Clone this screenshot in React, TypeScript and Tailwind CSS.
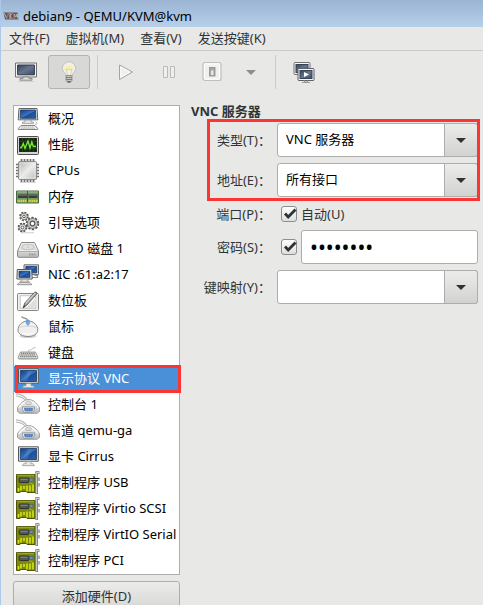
import { useState, type ReactNode } from "react";

/* ---------- icons ---------- */

function Icon({ children, size = 24 }: { children: ReactNode; size?: number }) {
  return (
    <svg width={size} height={size} viewBox="0 0 24 24" fill="none" aria-hidden="true" className="shrink-0">
      {children}
    </svg>
  );
}

function Gradients() {
  return (
    <svg width="0" height="0" aria-hidden="true" className="absolute">
      <defs>
        <linearGradient id="blue" x1="0" y1="0" x2="1" y2="1">
          <stop offset="0" stopColor="#123f86" />
          <stop offset="0.5" stopColor="#3c74c0" />
          <stop offset="0.55" stopColor="#1c4f9b" />
          <stop offset="1" stopColor="#2a62ad" />
        </linearGradient>
        <linearGradient id="slate" x1="0" y1="0" x2="1" y2="1">
          <stop offset="0" stopColor="#36445a" />
          <stop offset="0.5" stopColor="#66758d" />
          <stop offset="1" stopColor="#3d4b61" />
        </linearGradient>
        <linearGradient id="metal" x1="0" y1="0" x2="1" y2="1">
          <stop offset="0" stopColor="#b4b4b2" />
          <stop offset="0.5" stopColor="#ececea" />
          <stop offset="1" stopColor="#b9b9b7" />
        </linearGradient>
        <linearGradient id="silver" x1="0" y1="0" x2="0" y2="1">
          <stop offset="0" stopColor="#fbfbfa" />
          <stop offset="1" stopColor="#bcbdba" />
        </linearGradient>
      </defs>
    </svg>
  );
}

const ComputerIcon = () => (
  <Icon>
    <path d="M3 1.5h18l.8 11.3H2.2z" fill="#eeeeec" stroke="#62645f" />
    <path d="M4.5 3h15l.4 8.3H4.1z" fill="url(#blue)" stroke="#173764" strokeWidth=".8" />
    <path d="M9 13h6v2h2.5v1.6h-11V15H9z" fill="#e4e4e2" stroke="#8b8d88" strokeWidth=".7" />
    <path d="M5 18.5h14l2.7 3v1H2.3v-1z" fill="#f1f1ef" stroke="#777974" strokeWidth=".9" />
    <path d="M5.5 20h12.5M4.8 21.3h14" stroke="#a4a6a1" strokeDasharray="1.5 .6" strokeWidth=".8" />
    <path d="M19 17.5c2.5-.5 2.5-2 .5-2.5" stroke="#999b96" strokeWidth=".8" />
  </Icon>
);

const PerformanceIcon = () => (
  <Icon>
    <rect x="1.5" y="3.5" width="21" height="18" rx="1" fill="#d3d7cf" stroke="#4d504b" />
    <rect x="3.5" y="5.5" width="17" height="13" fill="#172613" stroke="#20251e" />
    <path d="M6.5 5v14M10 5v14M13.5 5v14M17 5v14M3 8.5h18M3 12h18M3 15.5h18" stroke="#31502a" strokeWidth=".5" />
    <path d="M4 14.5h1.5l1.800-4 1.700 5 3-7.500 2 7 1.800-6 1.500 4.500h2.700" stroke="#73ef2e" strokeWidth="1.300" />
  </Icon>
);

const CpuIcon = () => (
  <Icon>
    <path
      d="M5.5 0v23M8.5 0v23M11.5 0v23M14.5 0v23M17.5 0v23M0 5.5h23M0 8.5h23M0 11.5h23M0 14.5h23M0 17.5h23"
      stroke="#6f716d"
      strokeWidth="1.7"
    />
    <rect x="2.6" y="2.6" width="18" height="18" rx="1" fill="url(#metal)" stroke="#858784" />
    <rect x="4" y="4" width="15" height="15" stroke="#ededeb" strokeWidth=".7" />
    <path d="M4 23.500h16" stroke="#bbb" strokeWidth=".6" />
  </Icon>
);

const MemoryIcon = () => (
  <Icon>
    <path d="M.5 6h22v12H.5z" fill="#6f9a64" stroke="#446b3b" />
    <path d="M1 7h21" stroke="#a3c49a" />
    <rect x="2" y="9" width="9" height="4" fill="#3a3d39" />
    <rect x="12.5" y="9" width="9" height="4" fill="#3a3d39" />
    <path d="M2 10h9M12.5 10h9" stroke="#858984" />
    <path d="M1.5 16h9.500M12.500 16h9.500" stroke="#e8d64a" strokeWidth="2.600" strokeDasharray="1.200 .6" />
    <path d="M11.5 6v11" stroke="#315c2c" />
  </Icon>
);

const GearsIcon = () => (
  <Icon>
    <circle cx="8" cy="5.4" r="3.7" stroke="#555753" strokeWidth="2.2" strokeDasharray="1.8 1.1" />
    <circle cx="8" cy="5.4" r="3.2" fill="#e9e9e7" stroke="#6c6e6a" strokeWidth=".8" />
    <circle cx="8" cy="5.4" r="1.3" fill="#fff" stroke="#555753" />
    <circle cx="6.5" cy="16.5" r="3.8" stroke="#555753" strokeWidth="2.2" strokeDasharray="1.9 1.1" />
    <circle cx="6.5" cy="16.5" r="3.3" fill="#e9e9e7" stroke="#6c6e6a" strokeWidth=".8" />
    <circle cx="6.5" cy="16.5" r="1.4" fill="#fff" stroke="#555753" />
    <circle cx="16.5" cy="12.5" r="5.5" stroke="#555753" strokeWidth="2.4" strokeDasharray="2.2 1.25" />
    <circle cx="16.5" cy="12.5" r="5" fill="#c9cac7" stroke="#747672" strokeWidth=".8" />
    <circle cx="16.5" cy="12.5" r="2.3" fill="#fff" stroke="#555753" strokeWidth="1.2" />
    <path d="M5 21.8h13" stroke="#ccc" />
  </Icon>
);

const DiskIcon = () => (
  <Icon>
    <path d="M5.5 5.5h13l4 8.5v5.5l-1 .8h-19l-1-.8V14z" fill="url(#silver)" stroke="#868884" />
    <path d="M6.3 6.5h11.5l3.3 7H3z" fill="#d9dad7" stroke="#f5f5f4" strokeWidth=".7" />
    <ellipse cx="12" cy="10" rx="5.8" ry="2.8" fill="#e2e3e0" stroke="#b4b6b2" strokeWidth=".7" />
    <ellipse cx="12" cy="10" rx="1.8" ry=".8" fill="#c9cbc7" />
    <path d="M1.5 14.5h21" stroke="#a5a7a3" strokeWidth=".8" />
    <path d="M13 17.5h7" stroke="#8f918d" strokeWidth="1.8" strokeDasharray=".9 .7" />
  </Icon>
);

const NicIcon = () => (
  <Icon>
    <path d="M8 1.8h14.5v9.8H8z" fill="#eeeeec" stroke="#686a65" />
    <path d="M9.8 3.4h11v6.5h-11z" fill="url(#blue)" stroke="#173764" strokeWidth=".8" />
    <path d="M13.5 14.5h8v-2h-3" stroke="#898b86" strokeWidth="1.2" />
    <path d="M1.3 6.5h14.4l.5 9.5H.9z" fill="#eeeeec" stroke="#555751" />
    <path d="M3 8.2h11v6.2H3z" fill="url(#blue)" stroke="#173764" strokeWidth=".8" />
    <path d="M6 16.3h5v1.6h2v1H4.2v-1H6z" fill="#e7e7e4" stroke="#8b8d88" strokeWidth=".6" />
    <path d="M3 19.7h11l1.8 2H1.2z" fill="#f1f1ef" stroke="#777974" strokeWidth=".8" />
  </Icon>
);

const TabletIcon = () => (
  <Icon>
    <rect x="1.5" y="4.500" width="21" height="17" rx="1" fill="#f0f0ee" stroke="#858783" />
    <rect x="4.2" y="6.8" width="15.6" height="12.400" fill="#fff" stroke="#b8bab6" strokeWidth=".8" />
    <path d="M11 18l9-9v8l-3 2.200h-8z" fill="#dededc" />
    <path d="M7 19l1.800-5L18.600 3.200q2.300-1 2.500 1.300L11 16z" fill="#9b9d99" stroke="#555753" strokeWidth=".8" />
    <path d="M9.800 14.300L19.2 4" stroke="#dadbd8" strokeWidth="1.1" />
    <path d="M7 19l1.2-2.7 1.2 1z" fill="#2e3436" />
  </Icon>
);

const MouseIcon = () => (
  <Icon>
    <path d="M5.5 1.5c1.5 3 5 0 6.2 4" stroke="#888a85" strokeWidth="1.2" />
    <ellipse cx="12" cy="21" rx="8.5" ry="2" fill="#cfcfcd" />
    <path d="M12 6C6 6 2 10.5 2 15c0 4 4.5 6.5 10 6.5s9.8-2.5 9.8-6.5c0-4.500-3.800-9-9.800-9z" fill="#f0f0ee" stroke="#888a85" />
    <path d="M3.500 12.800c4-2.300 13-2.300 17 0" stroke="#c9cbc7" strokeWidth=".8" />
    <path d="M10.800 5.200h2.200l.6 2.800-1.700 2.400-1.700-2.400z" fill="#78aeea" stroke="#4d87c8" strokeWidth=".7" />
    <path d="M5 17c2 2.500 11 3 14 0" stroke="#fff" />
  </Icon>
);

const KeyboardIcon = () => (
  <Icon>
    <path d="M12.500 11c-1-3 3-1.500 4-3 .5-1.500 1.500-1 3-1.500" stroke="#a9aba6" strokeWidth=".8" />
    <path d="M4.500 11h15l2.300 5v1.600H2.200V16z" fill="#e7e7e4" stroke="#888a85" strokeWidth=".8" />
    <path d="M5 12.300h14M4.500 14h15M3.800 15.700h16.500" stroke="#656762" strokeWidth="1.100" strokeDasharray="1.400 .5" />
    <path d="M3 18.500h18" stroke="#c9cac7" />
  </Icon>
);

const MonitorIcon = () => (
  <Icon>
    <path d="M2.500 1.800h19.800v14.400H2.500z" fill="#eeeeec" stroke="#555753" />
    <path d="M4.300 3.500h16.200v11H4.300z" fill="url(#blue)" stroke="#173764" strokeWidth=".8" />
    <path d="M12 4h4l-5 10H6.500z" fill="#6a9bdc" opacity=".35" />
    <path d="M10 16.500h5v2.200h2.200l1.300 2H6.300l1.300-2H10z" fill="#e8e8e5" stroke="#8d8f89" strokeWidth=".7" />
  </Icon>
);

const SerialIcon = () => (
  <Icon>
    <path d="M0 .8c5 .4 9 2 11 6.200M0 3c4 .3 7 1.500 9 4" stroke="#b4b6b2" strokeWidth="1.200" />
    <path d="M12.500 6.500c-3.500 0-7.500 3-11 8v4l2.500 1.800h17l2.500-1.800v-4c-3.500-5-6.500-8-11-8z" fill="url(#silver)" stroke="#989a96" strokeWidth=".9" />
    <path d="M3 14.500c5-8 14-8 19 0" stroke="#fff" strokeWidth="1.200" />
    <path d="M9.500 9.500c1.500-2 4.500-2 6 0l-.8 2h-4.400z" fill="#dcddda" stroke="#a9aba6" strokeWidth=".7" />
    <path d="M6.500 13.800h12v2.800L17 19.300H8l-1.500-2.700z" fill="#e9eaea" stroke="#8b8e92" strokeWidth=".8" />
    <path d="M8 14.800h9.300v1.600l-1.100 2H9.100l-1.100-2z" fill="#6f97cd" />
    <path d="M8.600 15.800h8.300M9.200 17.300h7" stroke="#3c66a4" strokeWidth=".8" strokeDasharray="1.200 .8" />
  </Icon>
);

const CardIcon = () => (
  <Icon>
    <path d="M.5 3.500H19v18h-8v-1H4v1H.5z" fill="#7d880f" stroke="#4c5507" />
    <path d="M1.200 4.300h17" stroke="#a4ac3d" />
    <path d="M5 15v4.500M8 15v3M11 14.500v6M14 14.500v6M17 13.500v7M2.500 17v3.500" stroke="#d5e613" strokeWidth="1.600" />
    <path d="M13 11.500l4 2" stroke="#b1bd25" strokeWidth=".8" />
    <rect x="3.200" y="7" width="9.800" height="4.500" rx=".7" fill="#555753" stroke="#30332e" />
    <path d="M4.500 8.300h7" stroke="#8c8e89" />
    <rect x="13.500" y="7.500" width="3.500" height="3" fill="#6091b6" stroke="#38627c" strokeWidth=".6" />
    <path d="M23.500 1.500h-2.800v21.500" stroke="#6c6e6a" strokeWidth="2.600" />
    <path d="M23.500 1.500h-2.800v21" stroke="#cfd1cd" strokeWidth="1.200" />
    <path d="M23 6.500v3.500M23 12v3.500" stroke="#858783" strokeWidth="1.300" />
  </Icon>
);

const VirtLogo = () => (
  <svg width="16" height="12" viewBox="0 0 16 12" fill="none" aria-hidden="true" className="shrink-0">
    <path d="M.5 2.500h14l1 7H2z" fill="#5e595b" />
    <path d="M1 3l3 5.500L5.500 3M7 3v6M7 6l2.500-3M7 6l2.500 3M11 9V4l2 3 1-3 1 5" stroke="#c4bab9" strokeWidth=".9" />
    <path d="M5.500 3.500L4 9M10 4v5" stroke="#913b3b" strokeWidth=".8" />
  </svg>
);

const ConsoleIcon = () => (
  <Icon>
    <path d="M1.500 3h21v14h-21z" fill="#f5f5f3" stroke="#6f716d" />
    <path d="M3.600 5h16.800v9.800H3.600z" fill="url(#slate)" stroke="#2d3a4e" />
    <path d="M9 17h6v1.500h3v1.700H6v-1.700h3z" fill="#e0e0dd" stroke="#777974" strokeWidth=".8" />
    <path d="M4 21.500h16" stroke="#d0d0cd" />
  </Icon>
);

const BulbIcon = () => (
  <Icon>
    <path d="M12 1.800a6.700 6.700 0 0 0-6.700 6.700c0 3.300 3.200 4.300 3.500 7h6.400c.3-2.700 3.500-3.700 3.500-7A6.700 6.700 0 0 0 12 1.800z" fill="#f0f0ea" stroke="#c0c1bc" />
    <ellipse cx="12" cy="8" rx="4.500" ry="2.500" fill="#f8efb0" />
    <path d="M10.500 15L9 9l1.800 1 1.200-1.500 1.200 1.500L15 9l-1.500 6" stroke="#cfc58a" strokeWidth=".6" />
    <path d="M9 15.500h6v5l-1.500 1.700h-3L9 20.500z" fill="#c3c5c1" stroke="#858783" strokeWidth=".8" />
    <path d="M9 17.500h6M9 19.500h6" stroke="#6c6e6a" strokeWidth=".8" />
    <path d="M10.500 21.800h3" stroke="#3c3f3b" />
  </Icon>
);

const PlayIcon = () => (
  <Icon>
    <path d="M5.500 5l13 7-13 7.500z" fill="#efefed" stroke="#a3a5a1" strokeLinejoin="round" />
    <path d="M6.800 7l9.200 5-9.200 5.300z" stroke="#fff" strokeWidth=".8" />
  </Icon>
);

const PauseIcon = () => (
  <Icon>
    <path d="M6.500 6.500h4v11h-4zM13.500 6.500h4v11h-4z" fill="#efefed" stroke="#b8bab6" />
  </Icon>
);

const PowerIcon = () => (
  <Icon>
    <rect x="3" y="2.500" width="18" height="18" rx="2" fill="#f0f0ee" stroke="#bfc1bd" strokeWidth="1.200" />
    <rect x="4.500" y="4" width="15" height="15" rx="1" stroke="#fff" />
    <rect x="9.500" y="7.500" width="5.500" height="8.500" fill="#a5a7a3" stroke="#8b8d89" strokeWidth=".8" />
    <rect x="11" y="10.500" width="2.500" height="4.500" fill="#e6e7e4" />
  </Icon>
);

const SnapshotIcon = () => (
  <Icon>
    <rect x="2" y="2.500" width="16" height="12" rx="1" fill="#f5f5f3" stroke="#70726e" />
    <rect x="4" y="4.500" width="12" height="8" fill="url(#slate)" stroke="#34435a" />
    <rect x="6" y="8.500" width="16" height="12" rx="1" fill="#f5f5f3" stroke="#5f615d" />
    <rect x="8" y="10.500" width="12" height="8" fill="url(#slate)" stroke="#34435a" />
    <path d="M12 12l5 2.500-5 2.500z" fill="#fff" />
    <path d="M10 22.500h8M12.500 20.500v1.500h3v-1.500" stroke="#999b97" />
  </Icon>
);

const Arrow = ({ color }: { color: string }) => (
  <svg width="10" height="5" viewBox="0 0 10 5" aria-hidden="true">
    <path d="M0 0h10L5 5z" fill={color} />
  </svg>
);

/* ---------- data ---------- */

const menus = ["文件(F)", "虚拟机(M)", "查看(V)", "发送按键(K)"];

const hardware: { label: string; icon: ReactNode }[] = [
  { label: "概况", icon: <ComputerIcon /> },
  { label: "性能", icon: <PerformanceIcon /> },
  { label: "CPUs", icon: <CpuIcon /> },
  { label: "内存", icon: <MemoryIcon /> },
  { label: "引导选项", icon: <GearsIcon /> },
  { label: "VirtIO 磁盘 1", icon: <DiskIcon /> },
  { label: "NIC :61:a2:17", icon: <NicIcon /> },
  { label: "数位板", icon: <TabletIcon /> },
  { label: "鼠标", icon: <MouseIcon /> },
  { label: "键盘", icon: <KeyboardIcon /> },
  { label: "显示协议 VNC", icon: <MonitorIcon /> },
  { label: "控制台 1", icon: <SerialIcon /> },
  { label: "信道 qemu-ga", icon: <SerialIcon /> },
  { label: "显卡 Cirrus", icon: <MonitorIcon /> },
  { label: "控制程序 USB", icon: <CardIcon /> },
  { label: "控制程序 Virtio SCSI", icon: <CardIcon /> },
  { label: "控制程序 VirtIO Serial", icon: <CardIcon /> },
  { label: "控制程序 PCI", icon: <CardIcon /> },
];

/* ---------- parts ---------- */

function ToolButton({ label, active, children }: { label: string; active?: boolean; children: ReactNode }) {
  return (
    <button
      type="button"
      aria-label={label}
      aria-pressed={active}
      className={
        active
          ? "flex h-[34px] w-[42px] items-center justify-center rounded-[3px] border border-[#b3b3b1] bg-[#d8d8d6]"
          : "flex h-[34px] w-[42px] items-center justify-center"
      }
    >
      {children}
    </button>
  );
}

const Separator = () => <div className="mx-1.5 h-[34px] w-px bg-[#cbcbc9]" />;

function FormRow({ label, htmlFor, children }: { label: string; htmlFor: string; children: ReactNode }) {
  return (
    <div className="flex min-h-[21px] items-center gap-1.5">
      <label htmlFor={htmlFor} className="w-20 shrink-0 text-right whitespace-nowrap">
        {label}
      </label>
      {children}
    </div>
  );
}

function ComboBox({ id, options }: { id: string; options: string[] }) {
  return (
    <div className="relative h-[34px] min-w-0 flex-1">
      <select
        id={id}
        className="h-full w-full appearance-none rounded-[3px] border border-[#adadab] bg-white pr-9 pb-0.5 pl-2 text-black outline-none"
      >
        {options.map((o) => (
          <option key={o}>{o}</option>
        ))}
      </select>
      <span className="pointer-events-none absolute inset-y-0 right-0 flex w-[34px] items-center justify-center rounded-r-[3px] border border-[#adadab] bg-linear-to-b from-[#ececea] to-[#d2d2d0]">
        <Arrow color="#2e3436" />
      </span>
    </div>
  );
}

function CheckBox({ id, label }: { id: string; label?: string }) {
  const [on, setOn] = useState(true);
  return (
    <span className="relative ml-1 flex size-4 shrink-0">
      <input
        id={id}
        type="checkbox"
        aria-label={label}
        checked={on}
        onChange={(e) => setOn(e.target.checked)}
        className="size-4 appearance-none rounded-[3px] border border-[#8e8e8c] bg-linear-to-b from-white to-[#dededc]"
      />
      {on && (
        <svg viewBox="0 0 16 16" fill="none" aria-hidden="true" className="pointer-events-none absolute inset-0 size-4">
          <path d="M4 7.500l3.200 3.500L14.500 3.500" stroke="#2e3436" strokeWidth="2.800" />
        </svg>
      )}
    </span>
  );
}

/* ---------- window ---------- */

export default function App() {
  const [selected, setSelected] = useState(10);

  return (
    <div className="flex h-screen flex-col overflow-hidden border-l border-[#a9c8ea] bg-[#e8e8e6] font-['Noto_Sans','Noto_Sans_CJK_SC',sans-serif] text-[13px] leading-5 text-[#2e3436]">
      <Gradients />
      <header className="flex h-[27px] shrink-0 items-center gap-1 bg-linear-to-b from-[#9ab4d2] to-[#b7d0ea] pt-1 pl-0.5 text-black">
        <VirtLogo />
        <h1>debian9 - QEMU/KVM@kvm</h1>
      </header>

      <nav className="flex h-6 shrink-0 items-center gap-4 border-b border-[#cbcbc9] pb-0.5 pl-2">
        {menus.map((m) => (
          <button key={m} type="button">
            {m}
          </button>
        ))}
      </nav>

      <div role="toolbar" aria-label="工具栏" className="flex shrink-0 items-center gap-px pt-1 pl-1">
        <ToolButton label="控制台">
          <ConsoleIcon />
        </ToolButton>
        <ToolButton label="详情" active>
          <BulbIcon />
        </ToolButton>
        <Separator />
        <ToolButton label="运行">
          <PlayIcon />
        </ToolButton>
        <ToolButton label="暂停">
          <PauseIcon />
        </ToolButton>
        <ToolButton label="关机">
          <PowerIcon />
        </ToolButton>
        <button type="button" aria-label="关机选项" className="flex h-[34px] w-[34px] items-center justify-center">
          <Arrow color="#8c8f8f" />
        </button>
        <Separator />
        <ToolButton label="快照">
          <SnapshotIcon />
        </ToolButton>
      </div>

      <main className="flex min-h-0 flex-1 gap-[11px] pt-4 pr-[5px] pl-3">
        <aside className="flex w-[167px] shrink-0 flex-col gap-1.5">
          <ul className="shrink-0 border border-[#adadab] bg-white text-black">
            {hardware.map((h, i) => (
              <li key={h.label} className="relative">
                <button
                  type="button"
                  onClick={() => setSelected(i)}
                  className={
                    i === selected
                      ? "flex h-[26px] w-full items-center gap-2 bg-[#4a90d9] pl-0.5 whitespace-nowrap text-white"
                      : "flex h-[26px] w-full items-center gap-2 pl-0.5 whitespace-nowrap"
                  }
                >
                  {h.icon}
                  <span className="pb-0.5">{h.label}</span>
                </button>
                {i === 10 && (
                  <span className="pointer-events-none absolute -top-px -right-0.5 -bottom-px left-px border-3 border-[#fb3434]" />
                )}
              </li>
            ))}
          </ul>
          <button
            type="button"
            className="h-[34px] shrink-0 rounded-[3px] border border-[#adadab] bg-linear-to-b from-[#ececea] to-[#d2d2d0] pb-1 leading-4"
          >
            添加硬件(D)
          </button>
        </aside>

        <section className="min-w-0 flex-1">
          <h2 className="-mt-0.5 h-5 leading-4 font-bold">VNC 服务器</h2>
          <form className="flex flex-col gap-1.5" onSubmit={(e) => e.preventDefault()}>
            <div className="relative flex flex-col gap-1.5">
              <FormRow label="类型(T)：" htmlFor="type">
                <ComboBox id="type" options={["VNC 服务器", "Spice 服务器"]} />
              </FormRow>
              <FormRow label="地址(E)：" htmlFor="address">
                <ComboBox id="address" options={["所有接口", "仅本地主机"]} />
              </FormRow>
              <span className="pointer-events-none absolute -inset-y-1 -right-0.5 left-4 border-3 border-[#fb3434]" />
            </div>
            <FormRow label="端口(P)：" htmlFor="auto">
              <CheckBox id="auto" />
              <label htmlFor="auto" className="-ml-0.5">
                自动(U)
              </label>
            </FormRow>
            <FormRow label="密码(S)：" htmlFor="password">
              <CheckBox id="use-password" label="密码" />
              <input
                id="password"
                type="password"
                defaultValue="password"
                className="-ml-0.5 h-[34px] min-w-0 flex-1 rounded-[3px] border border-[#adadab] bg-white px-2 text-[21px] text-black outline-none"
              />
            </FormRow>
            <FormRow label="键映射(Y)：" htmlFor="keymap">
              <ComboBox id="keymap" options={["", "en-us"]} />
            </FormRow>
          </form>
        </section>
      </main>
    </div>
  );
}
